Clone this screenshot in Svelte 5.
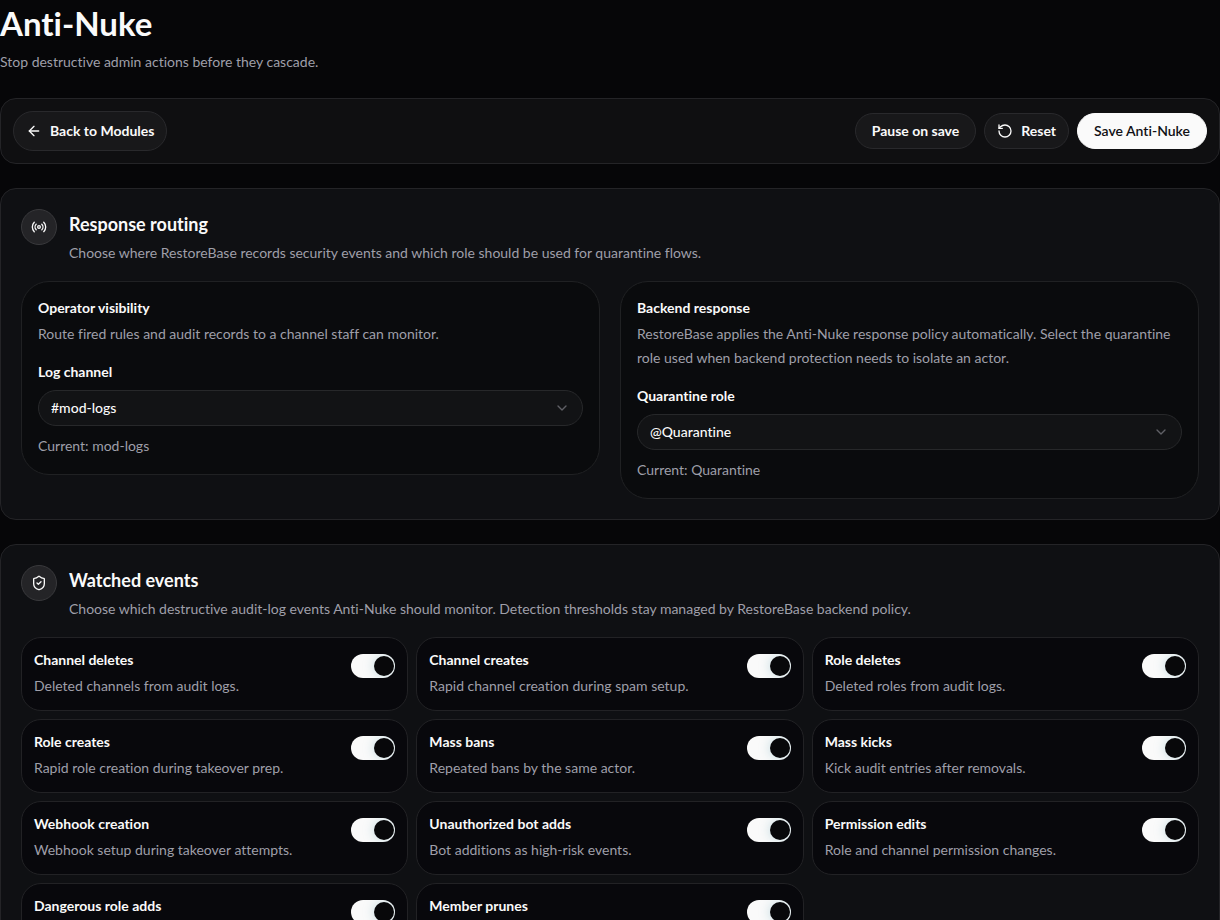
<script>
  let logChannel = $state('#mod-logs');
  let quarantineRole = $state('@Quarantine');

  let events = $state([
    { title: 'Channel deletes', text: 'Deleted channels from audit logs.', on: true },
    { title: 'Channel creates', text: 'Rapid channel creation during spam setup.', on: true },
    { title: 'Role deletes', text: 'Deleted roles from audit logs.', on: true },
    { title: 'Role creates', text: 'Rapid role creation during takeover prep.', on: true },
    { title: 'Mass bans', text: 'Repeated bans by the same actor.', on: true },
    { title: 'Mass kicks', text: 'Kick audit entries after removals.', on: true },
    { title: 'Webhook creation', text: 'Webhook setup during takeover attempts.', on: true },
    { title: 'Unauthorized bot adds', text: 'Bot additions as high-risk events.', on: true },
    { title: 'Permission edits', text: 'Role and channel permission changes.', on: true },
    { title: 'Dangerous role adds', on: true },
    { title: 'Member prunes', on: true }
  ]);
</script>

{#snippet chevron()}
  <svg class="chevron" viewBox="0 0 24 24" aria-hidden="true"><path d="m6 9 6 6 6-6" /></svg>
{/snippet}

<main>
  <header class="page-head">
    <h1>Anti-Nuke</h1>
    <p>Stop destructive admin actions before they cascade.</p>
  </header>

  <nav class="toolbar" aria-label="Module actions">
    <a class="btn back" href="#modules">
      <svg viewBox="0 0 24 24" aria-hidden="true"><path d="m12 19-7-7 7-7" /><path d="M19 12H5" /></svg>
      Back to Modules
    </a>
    <div class="actions">
      <button class="btn" type="button">Pause on save</button>
      <button class="btn with-icon" type="button">
        <svg viewBox="0 0 24 24" aria-hidden="true">
          <path d="M3 12a9 9 0 1 0 9-9 9.75 9.75 0 0 0-6.74 2.74L3 8" /><path d="M3 3v5h5" />
        </svg>
        Reset
      </button>
      <button class="btn primary" type="button">Save Anti-Nuke</button>
    </div>
  </nav>

  <section class="panel">
    <header class="panel-head">
      <span class="badge">
        <svg viewBox="0 0 24 24" aria-hidden="true">
          <path d="M4.9 19.1C1 15.2 1 8.8 4.9 4.9" /><path d="M7.8 16.2c-2.3-2.3-2.3-6.1 0-8.5" />
          <circle cx="12" cy="12" r="2" />
          <path d="M16.2 7.8c2.3 2.3 2.3 6.1 0 8.5" /><path d="M19.1 4.9C23 8.8 23 15.1 19.1 19" />
        </svg>
      </span>
      <div>
        <h2>Response routing</h2>
        <p>Choose where RestoreBase records security events and which role should be used for quarantine flows.</p>
      </div>
    </header>

    <div class="routes">
      <div class="route">
        <h3>Operator visibility</h3>
        <p>Route fired rules and audit records to a channel staff can monitor.</p>
        <label for="log-channel">Log channel</label>
        <div class="select">
          <select id="log-channel" bind:value={logChannel}><option>#mod-logs</option></select>
          {@render chevron()}
        </div>
        <p class="current">Current: mod-logs</p>
      </div>
      <div class="route">
        <h3>Backend response</h3>
        <p>RestoreBase applies the Anti-Nuke response policy automatically. Select the quarantine role used when backend protection needs to isolate an actor.</p>
        <label for="quarantine-role">Quarantine role</label>
        <div class="select">
          <select id="quarantine-role" bind:value={quarantineRole}><option>@Quarantine</option></select>
          {@render chevron()}
        </div>
        <p class="current">Current: Quarantine</p>
      </div>
    </div>
  </section>

  <section class="panel">
    <header class="panel-head">
      <span class="badge">
        <svg viewBox="0 0 24 24" aria-hidden="true">
          <path d="M20 13c0 5-3.5 7.5-7.66 8.95a1 1 0 0 1-.67-.01C7.5 20.5 4 18 4 13V6a1 1 0 0 1 1-1c2 0 4.5-1.2 6.24-2.72a1.17 1.17 0 0 1 1.52 0C14.51 3.81 17 5 19 5a1 1 0 0 1 1 1z" />
          <path d="m9 12 2 2 4-4" />
        </svg>
      </span>
      <div>
        <h2>Watched events</h2>
        <p>Choose which destructive audit-log events Anti-Nuke should monitor. Detection thresholds stay managed by RestoreBase backend policy.</p>
      </div>
    </header>

    <div class="events">
      {#each events as event, i}
        <div class="event">
          <div>
            <label for="event-{i}">{event.title}</label>
            {#if event.text}<p>{event.text}</p>{/if}
          </div>
          <input id="event-{i}" type="checkbox" role="switch" bind:checked={event.on} />
        </div>
      {/each}
    </div>
  </section>
</main>

<style>
  :global(body) {
    margin: 0;
    background: #060608;
  }

  main {
    display: flex;
    flex-direction: column;
    gap: 24px;
    padding-bottom: 24px;
    color: #fafafa;
    font: 400 14px/24px Lato, 'Open Sans', sans-serif;
    font-variant-ligatures: none;
  }

  h1, h2, h3, p {
    margin: 0;
  }

  p {
    color: #9f9fa9;
  }

  h1 {
    font-size: 33px;
    line-height: 46px;
    font-weight: 700;
  }

  h2 {
    font-size: 18px;
    line-height: 30px;
    font-weight: 700;
    margin-bottom: 2px;
  }

  h3, label {
    display: block;
    font-size: 14px;
    line-height: 20px;
    font-weight: 700;
  }

  svg {
    width: 16px;
    height: 16px;
    flex: none;
    fill: none;
    stroke: currentColor;
    stroke-width: 2;
    stroke-linecap: round;
    stroke-linejoin: round;
  }

  .page-head p {
    margin-top: 4px;
  }

  .toolbar {
    display: flex;
    align-items: center;
    justify-content: space-between;
    padding: 12px;
    border: 1px solid #242427;
    border-radius: 16px;
    background: #0f0f11;
  }

  .actions {
    display: flex;
    gap: 8px;
  }

  .btn {
    display: inline-flex;
    align-items: center;
    justify-content: center;
    gap: 8px;
    box-sizing: border-box;
    height: 36px;
    padding: 0 16px;
    border: 1px solid #29292c;
    border-radius: 18px;
    background: #18181a;
    color: #fafafa;
    font: inherit;
    font-variant-ligatures: none;
    font-weight: 700;
    text-decoration: none;
    cursor: pointer;
  }

  .back {
    height: 40px;
    padding: 0 12px;
    border-radius: 20px;
  }

  .with-icon {
    padding: 0 12px;
  }

  .primary {
    border-color: #fafafa;
    background: #fafafa;
    color: #101014;
    font-weight: 600;
  }

  .panel {
    padding: 20px;
    border: 1px solid #242427;
    border-radius: 16px;
    background: #0f1013;
  }

  .panel-head {
    display: flex;
    gap: 12px;
    margin-bottom: 16px;
  }

  .badge {
    display: grid;
    place-items: center;
    flex: none;
    box-sizing: border-box;
    width: 36px;
    height: 36px;
    border: 1px solid #39393c;
    border-radius: 50%;
    background: #242427;
  }

  .routes {
    display: grid;
    grid-template-columns: repeat(2, 1fr);
    align-items: start;
    gap: 20px;
  }

  .route {
    padding: 16px;
    border: 1px solid #202123;
    border-radius: 28px;
    background: #0a0b0d;
  }

  .route h3 {
    margin-bottom: 4px;
  }

  .route label {
    margin: 16px 0 8px;
  }

  .select {
    display: grid;
    align-items: center;
    margin-bottom: 8px;
  }

  .select > :global(*) {
    grid-area: 1 / 1;
  }

  select {
    appearance: none;
    box-sizing: border-box;
    width: 100%;
    height: 36px;
    padding: 0 36px 0 12px;
    border: 1px solid #27282a;
    border-radius: 18px;
    background: #121315;
    color: #fafafa;
    font: inherit;
    font-weight: 500;
    font-variant-ligatures: none;
  }

  .chevron {
    justify-self: end;
    margin-right: 13px;
    color: #606066;
    pointer-events: none;
  }

  .events {
    display: grid;
    grid-template-columns: repeat(3, 1fr);
    grid-auto-rows: 1fr;
    gap: 8px;
  }

  .event {
    display: flex;
    align-items: flex-start;
    justify-content: space-between;
    gap: 12px;
    padding: 12px;
    border: 1px solid #222225;
    border-radius: 20px;
    background: #08080c;
  }

  .event label {
    margin-bottom: 4px;
  }

  input {
    appearance: none;
    display: flex;
    flex: none;
    box-sizing: border-box;
    width: 44px;
    height: 24px;
    margin: 4px 0 0;
    padding: 2px 1px;
    border-radius: 12px;
    background: #3a3a3f;
    overflow: hidden;
    cursor: pointer;
  }

  input::before {
    content: '';
    width: 20px;
    height: 20px;
    border-radius: 50%;
    background: #08080a;
  }

  input:checked {
    justify-content: flex-end;
    background: #fafafa;
  }

  input:checked::before {
    box-shadow: 0 0 12px rgba(110, 170, 185, 0.4);
  }
</style>
